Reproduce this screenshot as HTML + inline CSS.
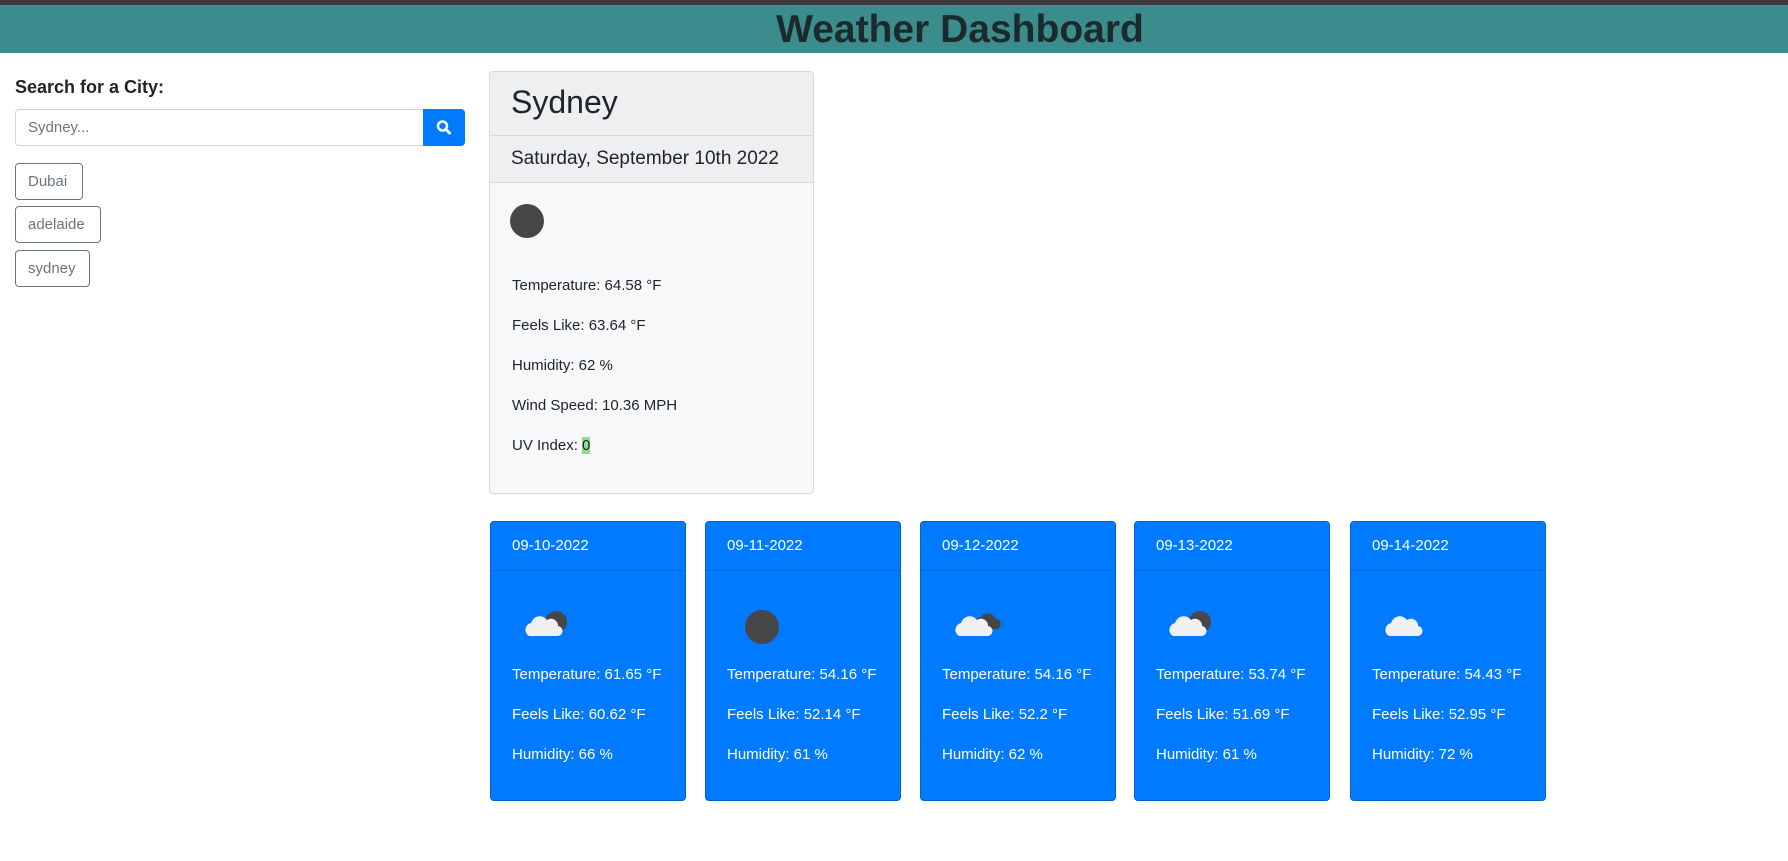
<!DOCTYPE html>
<html><head><meta charset="utf-8"><style>
*{box-sizing:border-box;margin:0;padding:0}
body{width:1788px;height:861px;background:#fff;font-family:"Liberation Sans",sans-serif;color:#212529;position:relative;overflow:hidden}
.abs{position:absolute}
.top{left:0;top:0;width:1788px;height:5px;background:#3b3b3b}
.hdr{left:0;top:5px;width:1788px;height:48px;background:#3a8d8c;text-align:center;font-weight:bold;font-size:39px;line-height:50px;color:#1c2a2e;padding-left:132px}
.lbl{left:15px;top:77px;font-weight:bold;font-size:18px}
.inp{left:15px;top:109px;width:409px;height:37px;border:1px solid #ced4da;border-radius:4px 0 0 4px;font-size:15px;color:#6c757d;padding:9px 12px}
.sbtn{left:423px;top:109px;width:42px;height:37px;background:#007bff;border-radius:0 4px 4px 0}
.cb{left:15px;height:37px;border:1px solid #6c757d;border-radius:4px;font-size:15px;color:#6c757d;padding:9px 12px;line-height:18px}
.main{left:489px;top:71px;width:325px;height:423px;border:1px solid #d6d8db;border-radius:4px;background:#f7f8f9;overflow:hidden}
.mh{position:absolute;left:0;top:0;width:100%;height:64px;background:#eeeff1;border-bottom:1px solid #d6d8db;font-size:32px;padding:12px 21px}
.md{position:absolute;left:0;top:64px;width:100%;height:47px;background:#eeeff1;border-bottom:1px solid #d6d8db;font-size:19px;padding:12px 21px}
.t{position:absolute;font-size:15px;white-space:nowrap}
.fc{top:521px;width:196px;height:280px;background:#007bff;border:1px solid #0062cc;border-radius:4px;color:#fff}
.fh{position:absolute;left:0;top:0;width:100%;height:49px;border-bottom:1px solid #0069d9;font-size:15px;padding:15px 21px}
</style></head><body>
<div class="abs top"></div>
<div class="abs hdr">Weather Dashboard</div>
<div class="abs lbl">Search for a City:</div>
<div class="abs inp">Sydney...</div>
<div class="abs sbtn"><svg width="42" height="37" viewBox="0 0 42 37"><circle cx="19.5" cy="17" r="4.5" fill="none" stroke="#fff" stroke-width="2.5"/><line x1="23" y1="20.5" x2="26.5" y2="24" stroke="#fff" stroke-width="3" stroke-linecap="round"/></svg></div>
<div class="abs cb" style="top:163px;width:68px">Dubai</div>
<div class="abs cb" style="top:206px;width:86px">adelaide</div>
<div class="abs cb" style="top:250px;width:75px">sydney</div>

<div class="abs main">
<div class="mh">Sydney</div>
<div class="md">Saturday, September 10th 2022</div>
<svg style="position:absolute;left:19px;top:131px" width="36" height="36"><circle cx="18" cy="18" r="17" fill="#47474a"/></svg>
<div class="t" style="left:22px;top:205px">Temperature: 64.58 °F</div>
<div class="t" style="left:22px;top:245px">Feels Like: 63.64 °F</div>
<div class="t" style="left:22px;top:285px">Humidity: 62 %</div>
<div class="t" style="left:22px;top:325px">Wind Speed: 10.36 MPH</div>
<div class="t" style="left:22px;top:365px">UV Index: <span style="background:#8fdc8f">0</span></div>
</div>

<div class="abs fc" style="left:490px"><div class="fh">09-10-2022</div>
<svg style="position:absolute;left:30px;top:83px" width="50" height="40" viewBox="0 0 50 40"><circle cx="35" cy="17" r="11" fill="#47474a"/><path d="M8 31a7 7 0 0 1 2-13a9 9 0 0 1 16-3a7 7 0 0 1 11 6a5 5 0 0 1 -1 10z" fill="#f0f0f0"/></svg>
<div class="t" style="left:21px;top:144px">Temperature: 61.65 °F</div><div class="t" style="left:21px;top:184px">Feels Like: 60.62 °F</div><div class="t" style="left:21px;top:224px">Humidity: 66 %</div></div>

<div class="abs fc" style="left:705px"><div class="fh">09-11-2022</div>
<svg style="position:absolute;left:38px;top:87px" width="36" height="36"><circle cx="18" cy="18" r="17" fill="#47474a"/></svg>
<div class="t" style="left:21px;top:144px">Temperature: 54.16 °F</div><div class="t" style="left:21px;top:184px">Feels Like: 52.14 °F</div><div class="t" style="left:21px;top:224px">Humidity: 61 %</div></div>

<div class="abs fc" style="left:920px"><div class="fh">09-12-2022</div>
<svg style="position:absolute;left:30px;top:83px" width="52" height="40" viewBox="0 0 52 40"><path d="M26 24a7 7 0 0 1 4-12a8 8 0 0 1 14 1a6 6 0 0 1 3 11z" fill="#47474a"/><path d="M8 31a7 7 0 0 1 2-13a9 9 0 0 1 16-3a7 7 0 0 1 11 6a5 5 0 0 1 -1 10z" fill="#f0f0f0"/></svg>
<div class="t" style="left:21px;top:144px">Temperature: 54.16 °F</div><div class="t" style="left:21px;top:184px">Feels Like: 52.2 °F</div><div class="t" style="left:21px;top:224px">Humidity: 62 %</div></div>

<div class="abs fc" style="left:1134px"><div class="fh">09-13-2022</div>
<svg style="position:absolute;left:30px;top:83px" width="50" height="40" viewBox="0 0 50 40"><circle cx="35" cy="17" r="11" fill="#47474a"/><path d="M8 31a7 7 0 0 1 2-13a9 9 0 0 1 16-3a7 7 0 0 1 11 6a5 5 0 0 1 -1 10z" fill="#f0f0f0"/></svg>
<div class="t" style="left:21px;top:144px">Temperature: 53.74 °F</div><div class="t" style="left:21px;top:184px">Feels Like: 51.69 °F</div><div class="t" style="left:21px;top:224px">Humidity: 61 %</div></div>

<div class="abs fc" style="left:1350px"><div class="fh">09-14-2022</div>
<svg style="position:absolute;left:30px;top:83px" width="50" height="40" viewBox="0 0 50 40"><path d="M8 31a7 7 0 0 1 2-13a9 9 0 0 1 16-3a7 7 0 0 1 11 6a5 5 0 0 1 -1 10z" fill="#f0f0f0"/></svg>
<div class="t" style="left:21px;top:144px">Temperature: 54.43 °F</div><div class="t" style="left:21px;top:184px">Feels Like: 52.95 °F</div><div class="t" style="left:21px;top:224px">Humidity: 72 %</div></div>
</body></html>
